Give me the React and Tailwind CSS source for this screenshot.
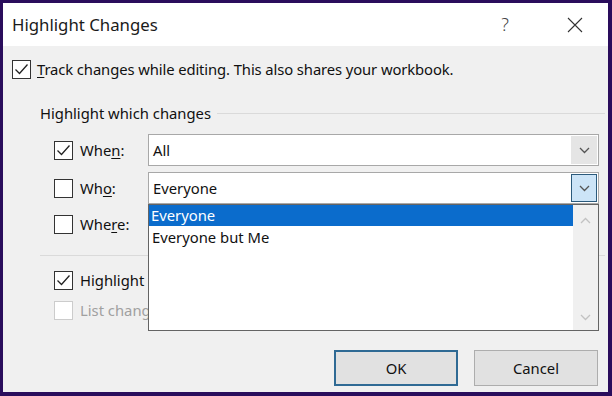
const font = { fontFamily: '"Noto Sans", "Open Sans", Arial, sans-serif' };

function Check({ checked, disabled }) {
  return (
    <div
      className={`w-[19px] h-[19px] shrink-0 border bg-white flex items-center justify-center ${
        disabled ? "border-[#cccccc]" : "border-[#333333]"
      }`}
    >
      {checked && (
        <svg width="17" height="17" viewBox="0 0 17 17">
          <polyline
            points="2.5,8.5 6.5,12.5 14.5,3.5"
            fill="none"
            stroke="#222"
            strokeWidth="1.3"
          />
        </svg>
      )}
    </div>
  );
}

function Chevron({ color = "#555", up = false }) {
  return (
    <svg width="11" height="7" viewBox="0 0 11 7">
      <polyline
        points={up ? "1,6 5.5,1.5 10,6" : "1,1 5.5,5.5 10,1"}
        fill="none"
        stroke={color}
        strokeWidth="1.3"
      />
    </svg>
  );
}

function Combo({ value, open, children }) {
  return (
    <div className="relative flex-1 h-[32px]">
      <div className="h-full border border-[#a8a8a8] bg-white flex items-center pl-[4px] pr-[1px]">
        <span className="flex-1 text-[14.8px] text-[#111]">{value}</span>
        <div
          className={`w-[26px] h-[28px] flex items-center justify-center border ${
            open
              ? "bg-[#cce4f7] border-[#2b5a7c]"
              : "bg-[#e5e5e5] border-[#e5e5e5]"
          }`}
        >
          <Chevron />
        </div>
      </div>
      {children}
    </div>
  );
}

function Row({ checked, label, u, rest, value, open, children, className }) {
  return (
    <div className={`flex items-center h-[32px] ${className}`}>
      <Check checked={checked} />
      <span className="ml-[7px] w-[68px] text-[14.8px] text-[#111]">
        {label}
        <span className="underline underline-offset-2">{u}</span>
        {rest}
      </span>
      <Combo value={value} open={open}>
        {children}
      </Combo>
    </div>
  );
}

export default function App() {
  return (
    <div
      className="w-[612px] h-[396px] bg-[#2a0d5c] pt-[3px] pl-[3px] pr-[4px] pb-[4px]"
      style={font}
    >
      <div className="w-full h-full flex flex-col">
        {/* title bar */}
        <div className="h-[43px] bg-white flex items-center pl-[9px] pr-[25px] shrink-0">
          <span className="flex-1 text-[16.8px] text-[#1a1a1a]">
            Highlight Changes
          </span>
          <span className="text-[18px] text-[#444] font-light mr-[58px]">?</span>
          <svg width="16" height="16" viewBox="0 0 16 16">
            <path d="M1 1 L15 15 M15 1 L1 15" stroke="#333" strokeWidth="1.1" />
          </svg>
        </div>

        {/* body */}
        <div className="flex-1 bg-[#f0f0f0] px-[9px] flex flex-col">
          <div className="flex items-center h-[19px] mt-[14px]">
            <Check checked />
            <span className="ml-[6px] text-[14.8px] text-[#111] tracking-[-0.1px]">
              <span className="underline underline-offset-2">T</span>rack
              changes while editing. This also shares your workbook.
            </span>
          </div>

          <div className="flex items-center h-[20px] mt-[24px] pl-[28px]">
            <span className="text-[14.8px] text-[#111]">Highlight which changes</span>
            <div className="flex-1 h-px bg-[#dadada] ml-[6px] mr-[-6px]" />
          </div>

          <div className="pl-[42px] flex flex-col">
            <Row checked label="Whe" u="n" rest=":" value="All" className="mt-[11px]" />
            <Row label="Wh" u="o" rest=":" value="Everyone" open className="mt-[6px]">
              <div className="absolute left-0 right-0 top-[32px] h-[127px] z-10 bg-white border border-[#646464] flex">
                <div className="flex-1 flex flex-col">
                  <div className="h-[21px] bg-[#0b6ccc] text-white text-[14.8px] leading-[21px] pl-[2px]">
                    Everyone
                  </div>
                  <div className="h-[22px] text-[#111] text-[14.8px] leading-[22px] pl-[3px]">
                    Everyone but Me
                  </div>
                </div>
                <div className="w-[25px] bg-[#f0f0f0] flex flex-col items-center justify-between pt-[12px] pb-[9px]">
                  <Chevron color="#c2c2c2" up />
                  <Chevron color="#c2c2c2" />
                </div>
              </div>
            </Row>
            <Row label="Whe" u="r" rest="e:" value="" className="mt-[4px]" />
          </div>

          <div className="h-px bg-[#dadada] mt-[15px] ml-[28px] mr-[-6px]" />

          <div className="pl-[42px] flex flex-col">
            <div className="flex items-center h-[19px] mt-[15px]">
              <Check checked />
              <span className="ml-[7px] text-[14.8px] text-[#111]">
                Highlight changes on screen
              </span>
            </div>
            <div className="flex items-center h-[19px] mt-[11px]">
              <Check disabled />
              <span className="ml-[7px] text-[14.8px] text-[#a0a0a0]">
                List changes on a new sheet
              </span>
            </div>
          </div>

          <div className="flex justify-end gap-[16px] mt-[30px] pr-[1px]">
            <button className="w-[124px] h-[36px] bg-[#e1e1e1] border-2 border-[#2f6a94] text-[14.8px] text-[#111]">
              OK
            </button>
            <button className="w-[124px] h-[36px] bg-[#e1e1e1] border border-[#adadad] text-[14.8px] text-[#111]">
              Cancel
            </button>
          </div>
        </div>
      </div>
    </div>
  );
}
